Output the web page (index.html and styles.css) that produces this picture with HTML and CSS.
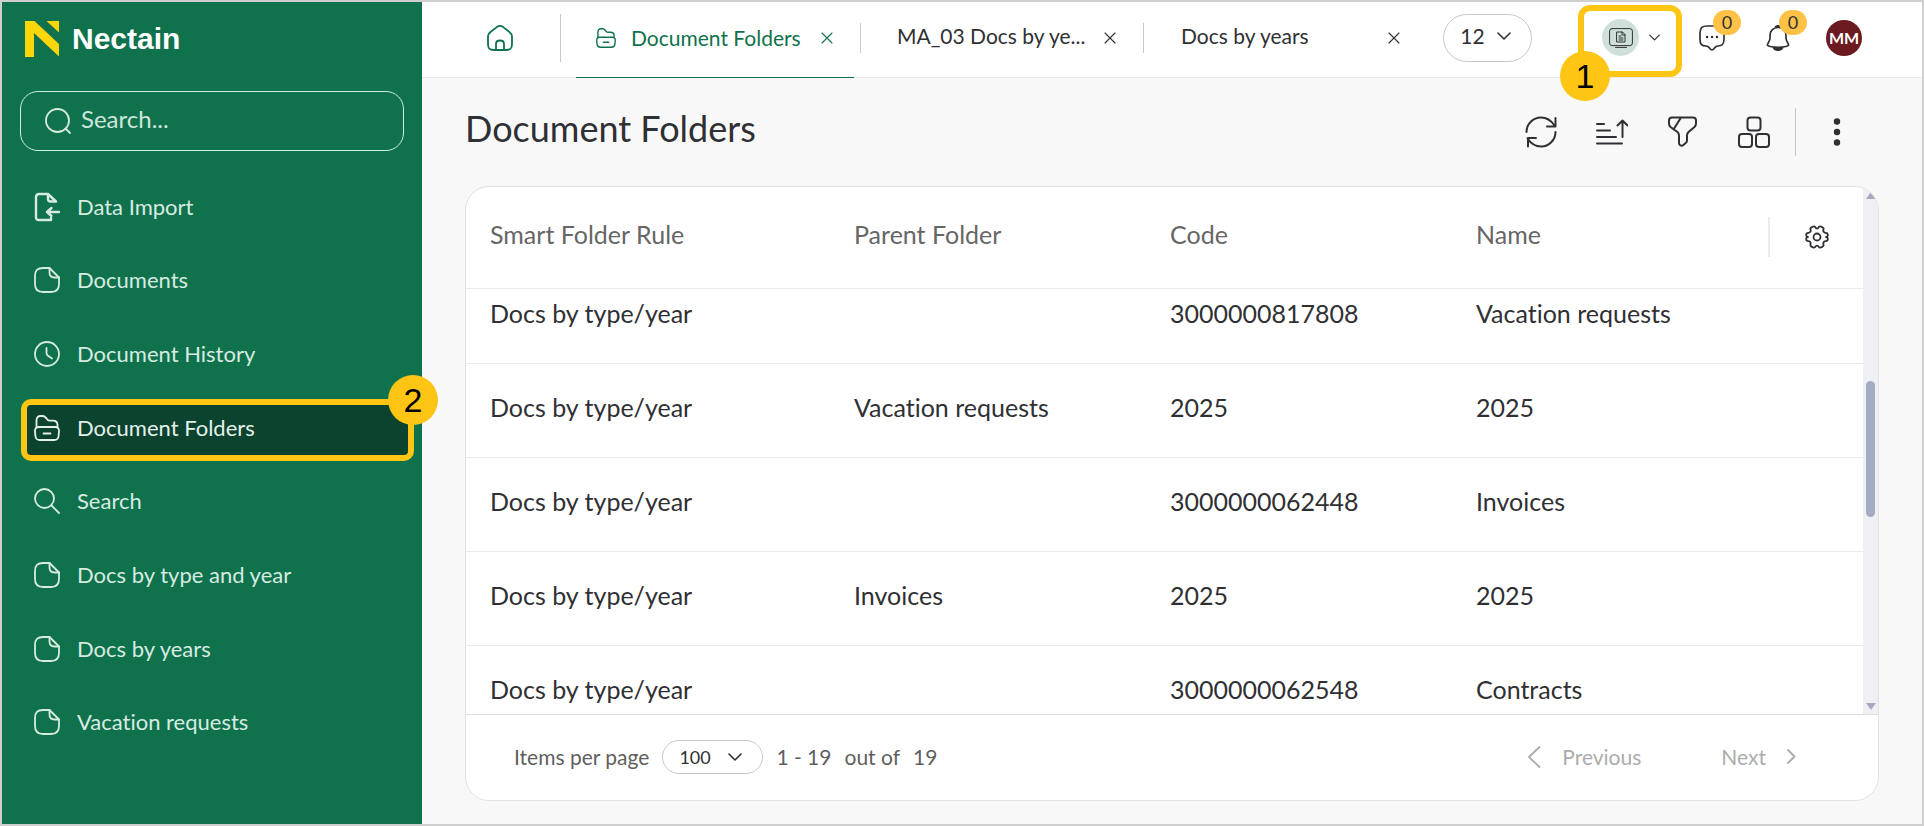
FILE: index.html
```html
<!DOCTYPE html>
<html lang="en">
<head>
  <meta charset="UTF-8" />
  <title>Nectain - Document Folders</title>
  <meta name="viewport" content="width=device-width, initial-scale=1.0" />
  <link rel="stylesheet" href="styles.css">
</head>
<body>
  <!-- shared icons -->
  <svg class="sprite" aria-hidden="true">
    <symbol id="i-doc" viewBox="0 0 26 26">
      <path d="M15.500 1H9C3.500 1 1 3.500 1 9v8c0 5.500 2.500 8 8 8h8c5.500 0 8-2.500 8-8v-6.500z" />
      <path d="M15.500 1v4.500c0 3.500 1.500 5 5 5H25" />
    </symbol>
    <symbol id="i-folder" viewBox="0 0 26 26">
      <path d="M2.500 12V5.500C2.500 2.500 4 1 6.500 1h2.200c1.600 0 2.300.6 3.300 1.900l1.200 1.500c.7.900 1.300 1.200 2.500 1.200H19c3 0 4.500 1.500 4.500 4.400v2" />
      <path d="M5 12h16c2.800 0 4.200 1.500 4 4.300l-.4 4.700c-.3 2.800-1.600 4-4.300 4H5.700c-2.700 0-4-1.200-4.300-4L1 16.300C.8 13.500 2.200 12 5 12z" />
      <path d="M9.500 18.500h7" />
    </symbol>
    <symbol id="i-close" viewBox="0 0 12 12"><path d="M1 1l10 10M11 1L1 11" /></symbol>
    <symbol id="i-down" viewBox="0 0 14 8"><path d="M1 1l6 6 6-6" /></symbol>
  </svg>

  <div class="app">
    <aside class="sidebar">
      <a class="logo" href="#">
        <svg width="34" height="36" viewBox="0 0 34 36" aria-hidden="true">
          <path fill="#ffd60a" d="M0 0h9.500L34 23v12.500L9 12v24H0zM21.500 0H34v11.500z" />
        </svg>
        <span>Nectain</span>
      </a>

      <label class="search">
        <svg class="icon" viewBox="0 0 26 26" aria-hidden="true"><circle cx="12.500" cy="12.500" r="11.500" /><path d="M20.500 20.500L25 25" /></svg>
        <input type="text" placeholder="Search..." aria-label="Search">
      </label>

      <nav class="menu">
        <a href="#">
          <svg class="icon bold" viewBox="0 0 26 26" aria-hidden="true">
            <path d="M17 26H5c-2.500 0-3-1-3-3V3.500C2 1 3 0 5 0h9l8 7.500M14 0v5c0 2 .5 2.500 2.500 2.500H22M25 18H13.500M17.500 14l-4.500 4 4.500 4M17 24v2" />
          </svg>
          Data Import
        </a>
        <a href="#"><svg class="icon" aria-hidden="true"><use href="#i-doc" /></svg>Documents</a>
        <a href="#">
          <svg class="icon" viewBox="0 0 26 26" aria-hidden="true"><circle cx="13" cy="13" r="12" /><path d="M12.500 7v5c0 1.500.5 2 1.500 2.700l4 2.800" /></svg>
          Document History
        </a>
        <a href="#" class="active">
          <svg class="icon" aria-hidden="true"><use href="#i-folder" /></svg>
          Document Folders
          <span class="mark">2</span>
        </a>
        <a href="#">
          <svg class="icon" viewBox="0 0 26 26" aria-hidden="true"><circle cx="10.500" cy="10.500" r="9.500" /><path d="M17.500 17.500L25 25" /></svg>
          Search
        </a>
        <a href="#"><svg class="icon" aria-hidden="true"><use href="#i-doc" /></svg>Docs by type and year</a>
        <a href="#"><svg class="icon" aria-hidden="true"><use href="#i-doc" /></svg>Docs by years</a>
        <a href="#"><svg class="icon" aria-hidden="true"><use href="#i-doc" /></svg>Vacation requests</a>
      </nav>
    </aside>

    <div class="content">
      <header class="topbar">
        <a class="home" href="#" aria-label="Home">
          <svg class="icon" viewBox="0 0 26 26" aria-hidden="true">
            <path d="M1 12c0-2.500.8-3.700 2.800-5.200l6-4.700c2.200-1.600 4.200-1.600 6.400 0l6 4.700c2 1.500 2.800 2.700 2.800 5.200v7c0 4.500-1.500 6-6 6H7c-4.500 0-6-1.500-6-6z" />
            <path d="M9 25v-6c0-2.500 1-3.500 4-3.500s4 1 4 3.500v6" />
          </svg>
        </a>
        <div class="tabs">
          <div class="tab current">
            <a href="#"><svg class="icon small" aria-hidden="true"><use href="#i-folder" /></svg>Document Folders</a>
            <button type="button" class="close" aria-label="Close tab"><svg aria-hidden="true"><use href="#i-close" /></svg></button>
          </div>
          <div class="tab tab-mid">
            <a href="#">MA_03 Docs by ye...</a>
            <button type="button" class="close" aria-label="Close tab"><svg aria-hidden="true"><use href="#i-close" /></svg></button>
          </div>
          <div class="tab tab-last">
            <a href="#">Docs by years</a>
            <button type="button" class="close" aria-label="Close tab"><svg aria-hidden="true"><use href="#i-close" /></svg></button>
          </div>
        </div>
        <button type="button" class="tab-count">12<svg class="chevron" aria-hidden="true"><use href="#i-down" /></svg></button>
        <div class="tools">
          <button type="button" class="workspace" aria-label="Workspace">
            <span class="workspace-icon">
              <svg width="24" height="20" viewBox="0 0 24 20" aria-hidden="true">
                <rect x=".6" y=".6" width="22.800" height="17" rx="2.500" />
                <path d="M6.500 19.400h11M8 4h5.500L16 6.500V14H8zM13 4v3h3M10 8h2M10 10h4M10 12h4" />
              </svg>
            </span>
            <svg class="chevron tiny" aria-hidden="true"><use href="#i-down" /></svg>
            <span class="mark">1</span>
          </button>
          <button type="button" class="bubble" aria-label="Messages">
            <svg width="26" height="26" viewBox="0 0 26 26" aria-hidden="true">
              <path d="M8 1h10c5 0 7 2 7 7v6c0 5-1.500 7-6 7-2 0-2.500.5-3.500 2s-1.500 2-2.500 2-1.500-.5-2.500-2-1.500-2-3.500-2c-4.500 0-6-2-6-7V8c0-5 2-7 7-7z" />
              <path class="dots" d="M8 12h.1M13 12h.1M18 12h.1" />
            </svg>
            <span class="badge">0</span>
          </button>
          <button type="button" class="bubble" aria-label="Notifications">
            <svg width="26" height="26" viewBox="0 0 26 26" aria-hidden="true">
              <path d="M13 2.500c-5 0-8 3.500-8 8V13c0 2-.5 3-1.500 4.500C1.500 20.500 2.500 21 5 21.500c5 1 11 1 16 0 2.500-.5 3.500-1 1.500-4C21.500 16 21 15 21 13v-2.500c0-4.500-3-8-8-8z" />
              <path class="solid" d="M10.500 1.800c1.500-1.200 3.500-1.200 5 0zM8.500 22.800h9c-1 3.200-8 3.200-9 0z" />
            </svg>
            <span class="badge">0</span>
          </button>
          <button type="button" class="avatar">MM</button>
        </div>
      </header>

      <main class="page">
        <div class="page-head">
          <h1>Document Folders</h1>
          <div class="actions">
            <button type="button" aria-label="Refresh">
              <svg viewBox="0 0 32 32" aria-hidden="true"><path d="M1.500 16C1.500 8 8 1.500 16 1.500c6 0 10.500 3.500 13.500 8M30.500 2v8.500H22M30.500 16c0 8-6.500 14.500-14.500 14.500-6 0-10.500-3.500-13.500-8M3 30.500V22h8" /></svg>
            </button>
            <button type="button" aria-label="Sort">
              <svg viewBox="0 0 32 32" aria-hidden="true"><path d="M1 8h7M1 14.500h13M1 21h19M1 27.500h25M26.500 21V4.500M21.500 9.500l5-5 5 5" /></svg>
            </button>
            <button type="button" aria-label="Filter">
              <svg viewBox="0 0 32 32" aria-hidden="true"><path d="M5 1.500h21c2 0 3 1 3 3v3c0 1.500-.5 2.500-1.500 3.500l-6 5c-1 1-1.500 2-1.500 3.500v5c0 1-.5 2-1.500 2.700l-2.200 1.900c-2 1.300-4.300.2-4.300-2.100v-7.500c0-1.500-.5-2.500-1.500-3.500L3.500 11c-1-1-1.500-2.500-1.500-3.500v-3c0-2 1-3 3-3zM14 1.500l-7.500 12" /></svg>
            </button>
            <button type="button" aria-label="View">
              <svg viewBox="0 0 32 32" aria-hidden="true"><rect x="9.500" y="1.500" width="13" height="13" rx="3" /><rect x="1" y="18" width="13" height="13" rx="3" /><rect x="18" y="18" width="13" height="13" rx="3" /></svg>
            </button>
            <button type="button" class="more" aria-label="More">
              <svg viewBox="0 0 32 32" aria-hidden="true"><circle cx="16" cy="5.500" r="3.200" /><circle cx="16" cy="16" r="3.200" /><circle cx="16" cy="26.500" r="3.200" /></svg>
            </button>
          </div>
        </div>

        <section class="card">
          <div class="grid">
            <div class="rows">
              <table>
                <colgroup>
                  <col class="c-rule"><col class="c-parent"><col class="c-code"><col><col class="c-settings">
                </colgroup>
                <thead>
                  <tr>
                    <th>Smart Folder Rule</th>
                    <th>Parent Folder</th>
                    <th>Code</th>
                    <th>Name</th>
                    <th class="settings">
                      <button type="button" aria-label="Column settings">
                        <svg width="24" height="24" viewBox="0 0 24 24" aria-hidden="true">
                          <path d="M8.200 1.500c1-.4 1.900 0 2.300 1 .5 1.300 2.500 1.300 3 0 .4-1 1.300-1.400 2.300-1l1.700.9c1 .5 1.300 1.400.9 2.400-.5 1.500.5 3 2.100 3 1.300.1 2.300.6 2.300 1.900v.6c0 .8-.6 1.300-1.300 1.700-.6.400-.6-.4 0 0 .7.400 1.300.9 1.300 1.700v.6c0 1.300-1 1.800-2.300 1.900-1.600 0-2.600 1.500-2.100 3 .4 1 .1 1.900-.9 2.400l-1.700.9c-1 .4-1.900 0-2.300-1-.5-1.300-2.500-1.300-3 0-.4 1-1.300 1.400-2.300 1l-1.700-.9c-1-.5-1.300-1.400-.9-2.400.5-1.500-.5-3-2.100-3-1.300-.1-2.300-.6-2.300-1.900v-.6c0-.8.600-1.300 1.300-1.700.6-.4.6.4 0 0-.7-.4-1.300-.9-1.300-1.700v-.6c0-1.300 1-1.800 2.300-1.900 1.600 0 2.600-1.500 2.100-3-.4-1-.1-1.900.9-2.400z" />
                          <circle cx="12" cy="12" r="3.500" />
                        </svg>
                      </button>
                    </th>
                  </tr>
                </thead>
                <tbody>
                  <tr class="scrolled"><td>Docs by type/year</td><td></td><td>3000000817808</td><td>Vacation requests</td><td></td></tr>
                  <tr><td>Docs by type/year</td><td>Vacation requests</td><td>2025</td><td>2025</td><td></td></tr>
                  <tr><td>Docs by type/year</td><td></td><td>3000000062448</td><td>Invoices</td><td></td></tr>
                  <tr><td>Docs by type/year</td><td>Invoices</td><td>2025</td><td>2025</td><td></td></tr>
                  <tr><td>Docs by type/year</td><td></td><td>3000000062548</td><td>Contracts</td><td></td></tr>
                </tbody>
              </table>
            </div>
            <div class="scrollbar" aria-hidden="true">
              <svg width="10" height="7" viewBox="0 0 10 7"><path d="M5 0l5 7H0z" /></svg>
              <div class="track"><div class="thumb"></div></div>
              <svg width="10" height="7" viewBox="0 0 10 7"><path d="M0 0h10L5 7z" /></svg>
            </div>
          </div>

          <footer class="pager">
            <label for="perPage">Items per page</label>
            <span class="per-page">
              <select id="perPage"><option>100</option></select>
              <svg class="chevron" aria-hidden="true"><use href="#i-down" /></svg>
            </span>
            <span class="range"><span>1 - 19</span><span>out of</span><span>19</span></span>
            <button type="button" class="prev" disabled>
              <svg width="14" height="22" viewBox="0 0 14 22" aria-hidden="true"><path d="M12.500 1L2 11l10.500 10" /></svg>Previous
            </button>
            <button type="button" class="next" disabled>
              Next<svg width="9" height="15" viewBox="0 0 9 15" aria-hidden="true"><path d="M1 1l6.500 6.500L1 14" /></svg>
            </button>
          </footer>
        </section>
      </main>
    </div>
  </div>
</body>
</html>
```
FILE: styles.css
```css
* { box-sizing: border-box; }
body {
  margin: 0;
  font-family: Lato, 'Liberation Sans', sans-serif;
  font-size: 21px;
  line-height: 28px;
  font-variant-ligatures: none;
  color: #2f3033;
}
a { color: inherit; text-decoration: none; }
button {
  font: inherit;
  color: inherit;
  background: none;
  border: none;
  padding: 0;
}
svg {
  fill: none;
  stroke: currentColor;
  stroke-linecap: round;
  stroke-linejoin: round;
  flex-shrink: 0;
}
.sprite { display: none; }
.icon { width: 26px; height: 26px; stroke-width: 1.8; overflow: visible; }
.icon.bold { stroke-width: 2.4; }
.icon.small { width: 20px; height: 20px; }
.chevron { width: 14px; height: 8px; stroke-width: 1.6; }
.chevron.tiny { width: 11px; height: 7px; }

.app {
  display: flex;
  height: 100vh;
  border: 2px solid #cfcfcf;
}

/* sidebar */
.sidebar {
  display: flex;
  flex-direction: column;
  flex: 0 0 420px;
  padding: 19px 18px 64px;
  background: #0f724d;
  color: #d7ebe1;
}
.logo {
  display: flex;
  align-items: center;
  gap: 13px;
  height: 36px;
  padding-left: 5px;
  font: bold 30px 'Liberation Sans', sans-serif;
  color: #fff;
}
.logo svg { stroke: none; }
.search {
  display: flex;
  align-items: center;
  gap: 10px;
  height: 60px;
  margin: 34px 0 20px;
  padding: 0 24px;
  border: 1px solid #c9f0dd;
  border-radius: 18px;
}
.search input {
  flex: 1;
  min-width: 0;
  padding: 0 0 4px;
  border: none;
  outline: none;
  background: none;
  font: inherit;
  font-size: 24px;
  color: inherit;
}
.search input::placeholder { color: #d0e6db; opacity: 1; }
.menu {
  display: grid;
  flex: 1;
  grid-auto-rows: 1fr;
  align-items: center;
  font-size: 22px;
}
.menu a {
  display: flex;
  align-items: center;
  position: relative;
  gap: 17px;
  height: 62px;
  margin: 0 -10px 0 1px;
  padding: 0 0 2px 13px;
}
.menu .active {
  margin-top: 2px;
  padding: 0 0 4px 7px;
  border: 6px solid #fec514;
  border-radius: 10px;
  background: #0b432e;
  color: #e4f1ea;
}
.mark {
  position: absolute;
  width: 50px;
  height: 50px;
  border-radius: 50%;
  background: #fec514;
  font: 34px/50px 'Liberation Sans', sans-serif;
  text-align: center;
  color: #000;
}
.menu .mark { top: -30px; right: -30px; }

/* top bar */
.content {
  display: flex;
  flex-direction: column;
  flex: 1;
  min-width: 0;
  background: #f8f8f8;
}
.topbar {
  display: flex;
  align-items: center;
  height: 76px;
  padding: 0 60px 4px 0;
  border-bottom: 1px solid #ebebeb;
  background: #fff;
}
.home {
  display: flex;
  align-items: center;
  width: 139px;
  height: 48px;
  padding-left: 65px;
  border-right: 1px solid #c8c8c8;
  color: #0f724d;
}
.tabs {
  display: flex;
  align-items: center;
  align-self: stretch;
  margin-left: 15px;
}
.tab {
  display: flex;
  align-items: center;
  justify-content: space-between;
  height: 30px;
  padding-right: 27px;
}
.tab a {
  display: flex;
  align-items: center;
  gap: 15px;
  padding-bottom: 4px;
  white-space: nowrap;
}
.tab.current {
  width: 278px;
  height: auto;
  align-self: stretch;
  margin: 0 6px -5px 0;
  padding: 0 21px 4px 20px;
  border-bottom: 1px solid #0f724d;
  color: #0f724d;
}
.tab.current a { padding-bottom: 0; }
.tab-mid {
  width: 284px;
  padding-left: 36px;
  border-left: 1px solid #c8c8c8;
  border-right: 1px solid #c8c8c8;
}
.tab-last { width: 299px; padding: 0 43px 0 37px; }
.close { display: flex; }
.close svg { width: 12px; height: 12px; stroke-width: 1.1; }
.tab-count {
  display: flex;
  align-items: center;
  justify-content: center;
  gap: 12px;
  width: 89px;
  height: 48px;
  padding: 0 4px 3px 0;
  border: 1px solid #c8c8c8;
  border-radius: 24px;
}
.tools {
  display: flex;
  align-items: center;
  margin-left: auto;
}
.workspace {
  display: flex;
  align-items: center;
  position: relative;
  gap: 10px;
  width: 104px;
  height: 72px;
  margin: 6px 17px 0 0;
  padding: 0 0 6px 18px;
  border: 6px solid #fec514;
  border-radius: 12px;
}
.workspace .mark { left: -24px; bottom: -30px; }
.workspace-icon {
  display: flex;
  align-items: center;
  justify-content: center;
  width: 37px;
  height: 37px;
  border-radius: 50%;
  background: #cfe0da;
}
.bubble {
  display: flex;
  position: relative;
  margin-right: 40px;
  stroke-width: 1.7;
}
.bubble .dots { stroke-width: 2.4; }
.bubble .solid { fill: currentColor; }
.badge {
  position: absolute;
  top: -15px;
  right: -16px;
  width: 28px;
  height: 25px;
  border-radius: 13px;
  background: #ffc247;
  font-size: 18px;
  line-height: 25px;
  text-align: center;
}
.avatar {
  width: 36px;
  height: 36px;
  margin-left: -5px;
  border-radius: 50%;
  background: #6b1b20;
  font-size: 16px;
  font-weight: bold;
  color: #fff;
}

/* page */
.page {
  display: flex;
  flex-direction: column;
  flex: 1;
  min-height: 0;
  padding: 0 43px 23px;
}
.page-head {
  display: flex;
  align-items: center;
  justify-content: space-between;
  height: 108px;
  flex-shrink: 0;
}
h1 {
  margin: 0;
  padding-bottom: 8px;
  font-size: 36px;
  line-height: 44px;
  font-weight: normal;
}
.actions { display: flex; align-items: center; gap: 39px; padding-right: 26px; }
.actions svg { display: block; width: 32px; height: 32px; stroke-width: 2; }
.actions .more {
  margin-left: -14px;
  padding: 8px 0 8px 25px;
  border-left: 1px solid #c8c8c8;
}
.actions .more svg { fill: currentColor; stroke: none; }
.card {
  display: flex;
  flex-direction: column;
  flex: 1;
  min-height: 0;
  border: 1px solid #e2e2e2;
  border-radius: 24px;
  background: #fff;
  overflow: hidden;
}
.grid { display: flex; flex: 1; min-height: 0; }
.rows { flex: 1; overflow: hidden; }
table {
  width: 100%;
  border-collapse: collapse;
  table-layout: fixed;
  font-size: 25px;
}
.c-rule { width: 364px; }
.c-parent { width: 316px; }
.c-code { width: 306px; }
.c-settings { width: 95px; }
th, td {
  height: 94px;
  padding: 29px 0 0 24px;
  border-bottom: 1px solid #ebebeb;
  text-align: left;
  vertical-align: top;
}
th {
  height: 101px;
  padding-top: 33px;
  font-weight: normal;
  color: #666;
}
.scrolled td { height: 75px; padding-top: 10px; }
.settings { padding: 30px 0; }
.settings button {
  display: flex;
  align-items: center;
  justify-content: center;
  width: 100%;
  height: 40px;
  border-left: 2px solid #ebebeb;
  stroke-width: 1.8;
  color: #2f3033;
}
.scrollbar {
  display: flex;
  flex-direction: column;
  align-items: center;
  width: 15px;
  padding: 5px 0 4px;
  background: #eff0f4;
}
.scrollbar svg { fill: #a6a8be; stroke: none; }
.track { flex: 1; width: 9px; }
.thumb {
  height: 27%;
  margin-top: 182px;
  border-radius: 5px;
  background: #a6abc4;
}
.pager {
  display: flex;
  align-items: center;
  height: 86px;
  padding: 0 82px 2px 48px;
  border-top: 1px solid #dedede;
  color: #5f5f5f;
}
.per-page {
  display: flex;
  align-items: center;
  position: relative;
  margin: 0 13px;
}
.per-page select {
  appearance: none;
  width: 101px;
  height: 34px;
  padding: 0 16px;
  border: 1px solid #c8c8c8;
  border-radius: 17px;
  background: #fff;
  font: inherit;
  font-size: 18px;
  color: #2f3033;
}
.per-page .chevron {
  position: absolute;
  right: 21px;
  color: #2f3033;
  pointer-events: none;
}
.range { display: flex; gap: 13px; }
.pager button {
  display: flex;
  align-items: center;
  gap: 21px;
  stroke-width: 1.8;
  color: #acacac;
}
.prev { margin-left: auto; }
.next { margin-left: 80px; }
```
